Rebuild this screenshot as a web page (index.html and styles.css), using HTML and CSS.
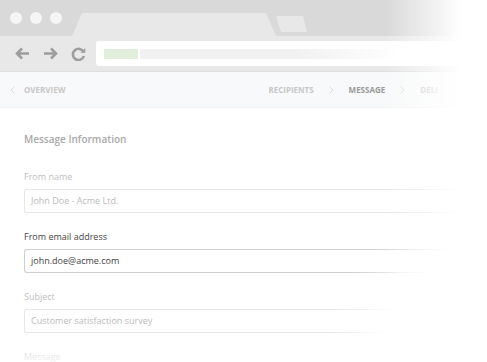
FILE: index.html
```html
<!DOCTYPE html>
<html lang="en">

<head>
    <meta charset="UTF-8">
    <meta name="viewport" content="width=device-width, initial-scale=1.0">
    <title>Message</title>
    <link rel="stylesheet" href="styles.css">
</head>

<body>
    <div class="browser">
        <div class="tabs">
            <div class="dots">
                <span class="dot"></span>
                <span class="dot"></span>
                <span class="dot"></span>
            </div>
            <div class="tab"></div>
            <div class="newtab"></div>
        </div>
        <div class="toolbar">
            <svg class="ico" width="15" height="13" viewBox="0 0 15 13">
                <path d="M7 1.5 L2 6.5 L7 11.5 M2.5 6.5 H14" />
            </svg>
            <svg class="ico" width="15" height="13" viewBox="0 0 15 13">
                <path d="M8 1.5 L13 6.5 L8 11.5 M12.5 6.5 H1" />
            </svg>
            <svg class="ico" width="15" height="14" viewBox="0 0 15 14">
                <path d="M12.6 5 A5.6 5.6 0 1 0 12.9 9" />
                <path class="fill" d="M9.5 5.8 L14.3 5.8 L14.3 1 Z" />
            </svg>
            <div class="address">
                <span class="lock"></span>
                <span class="url"></span>
            </div>
        </div>
        <div class="steps">
            <svg class="chev" width="5" height="8" viewBox="0 0 5 8">
                <path d="M4.5 0.5 L1 4 L4.5 7.5" />
            </svg>
            <span class="step">Overview</span>
            <div class="steplist">
                <span class="step">Recipients</span>
                <svg class="chev" width="5" height="8" viewBox="0 0 5 8">
                    <path d="M0.5 0.5 L4 4 L0.5 7.5" />
                </svg>
                <span class="step current">Message</span>
                <svg class="chev" width="5" height="8" viewBox="0 0 5 8">
                    <path d="M0.5 0.5 L4 4 L0.5 7.5" />
                </svg>
                <span class="step">Deli</span>
            </div>
        </div>
        <div class="content">
            <h2 class="title">Message Information</h2>
            <div class="field">
                <label class="lbl">From name</label>
                <div class="input">John Doe - Acme Ltd.</div>
            </div>
            <div class="field">
                <label class="lbl active">From email address</label>
                <div class="input focus">john.doe@acme.com</div>
            </div>
            <div class="field">
                <label class="lbl">Subject</label>
                <div class="input">Customer satisfaction survey</div>
            </div>
            <label class="lbl">Message</label>
        </div>
    </div>
    <div class="fade"></div>
</body>

</html>
```

FILE: styles.css
```css
* {
    padding: 0;
    margin: 0;
    box-sizing: border-box;
}

html,
body {
    width: 487px;
    height: 362px;
    overflow: hidden;
}

body {
    background: #fff;
    font-family: "Open Sans", "Liberation Sans", sans-serif;
    position: relative;
}

.browser {
    width: 487px;
    height: 362px;
    overflow: hidden;
}

/* tab strip */
.tabs {
    height: 36px;
    background: #d9d9d9;
    display: flex;
    align-items: flex-end;
    padding-left: 10px;
}

.dots {
    align-self: center;
    display: flex;
    gap: 8px;
}

.dot {
    width: 12px;
    height: 12px;
    border-radius: 50%;
    background: #f5f5f5;
}

.tab {
    width: 204px;
    height: 23px;
    margin-left: 10px;
    background: #e8e8e8;
    clip-path: polygon(10px 0, calc(100% - 10px) 0, 100% 100%, 0 100%);
}

.newtab {
    width: 31px;
    height: 16px;
    margin-bottom: 4px;
    background: #e8e8e8;
    clip-path: polygon(0 0, 27px 0, 100% 100%, 5px 100%);
}

/* toolbar */
.toolbar {
    height: 36px;
    background: #e8e8e8;
    border-bottom: 1px solid #dedede;
    display: flex;
    align-items: center;
    padding-left: 15px;
    gap: 13px;
}

.ico path {
    fill: none;
    stroke: #9d9d9d;
    stroke-width: 2.6;
}

.ico path.fill {
    fill: #9d9d9d;
    stroke: none;
}

.address {
    margin-left: -3px;
    flex: 1;
    height: 25px;
    background: #fff;
    border-radius: 3px 0 0 3px;
    display: flex;
    align-items: center;
    padding-left: 8px;
    gap: 2px;
}

.lock {
    width: 34px;
    height: 10px;
    background: #e1eedb;
}

.url {
    width: 260px;
    height: 10px;
    background: linear-gradient(to right, #f1f1f1 60%, rgba(241, 241, 241, 0));
}

/* steps */
.steps {
    height: 36px;
    background: #f8f9fa;
    border-bottom: 1px solid #f1f2f3;
    display: flex;
    align-items: center;
    padding-left: 10px;
}

.chev path {
    fill: none;
    stroke: #dcdcdc;
    stroke-width: 1;
}

.step {
    font-size: 8px;
    font-weight: 700;
    text-transform: uppercase;
    color: #c7c7c7;
    margin-left: 9px;
}

.steplist {
    display: flex;
    align-items: center;
    gap: 15px;
    margin-left: 203px;
}

.steplist .step {
    margin-left: 0;
}

.step.current {
    color: #9a9a9a;
}

/* form */
.content {
    padding: 24px 0 0 24px;
}

.title {
    font-size: 10px;
    font-weight: 600;
    line-height: 14px;
    color: #a9a9a9;
    margin-bottom: 25px;
}

.field {
    margin-bottom: 18px;
}

.lbl {
    display: block;
    font-size: 9px;
    line-height: 12px;
    color: #bdbdbd;
    margin-bottom: 6px;
}

.lbl.active {
    color: #444;
}

.input {
    width: 100%;
    height: 24px;
    border: 1px solid #e7e7e7;
    border-right: 0;
    border-radius: 3px 0 0 3px;
    padding-left: 6px;
    font-size: 9px;
    line-height: 22px;
    color: #bbb;
}

.input.focus {
    border-color: #cfcfcf;
    color: #444;
}

/* white fade over the right and bottom edges */
.fade {
    position: absolute;
    left: 0;
    top: 0;
    width: 487px;
    height: 362px;
    pointer-events: none;
    background:
        radial-gradient(circle at 487px 362px, #fff 105px, rgba(255, 255, 255, 0) 160px),
        linear-gradient(to bottom, rgba(255, 255, 255, 0) 335px, rgba(255, 255, 255, 0.8) 362px),
        linear-gradient(to right, rgba(255, 255, 255, 0) 385px, #fff 462px);
}
```
